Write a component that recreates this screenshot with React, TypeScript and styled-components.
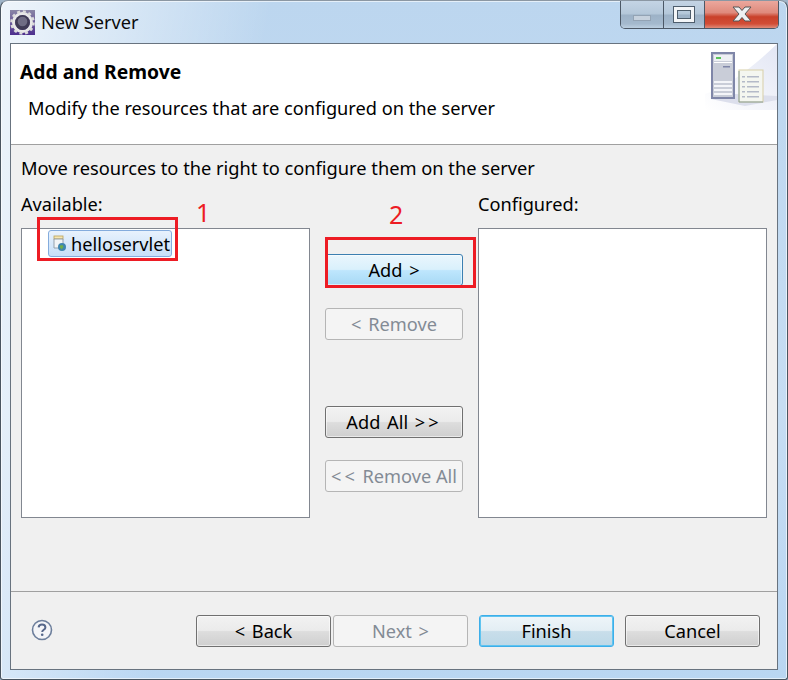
import React from "react";
import styled, { createGlobalStyle } from "styled-components";

const Global = createGlobalStyle`
  html, body { margin: 0; padding: 0; background: #9fb4c8; }
  #root { width: 788px; height: 680px; }
  * { box-sizing: border-box; }
`;

const Frame = styled.div`
  position: relative;
  width: 788px;
  height: 680px;
  display: flex;
  flex-direction: column;
  padding: 0 10px 9px;
  overflow: hidden;
  border: 1px solid #4a5560;
  border-top-color: #8b97a3;
  border-radius: 8px 8px 3px 3px;
  background:
    linear-gradient(100deg, rgba(255,255,255,0.75) 0%, rgba(255,255,255,0) 30%),
    linear-gradient(180deg, #bcd6ef 0%, #c6ddf3 60%, #b9d6f2 100%);
  font-family: "Noto Sans", "Open Sans", sans-serif;
  color: #000;
  margin: 0;
  box-shadow: inset 0 0 0 1px rgba(255,255,255,0.6);
`;

const TitleBar = styled.div`
  height: 42px;
  margin: 0 -1px 0 -1px;
  display: flex;
  align-items: flex-start;
  flex: none;
`;

const AppIcon = styled.svg`
  width: 25px;
  height: 25px;
  margin-top: 9px;
  flex: none;
`;

const TitleText = styled.div`
  font-size: 18.2px;
  line-height: 24px;
  margin: 9px 0 0 6px;
  color: #0a0a0a;
  flex: 1;
`;

const Controls = styled.div`
  display: flex;
  height: 29px;
  margin-right: -1px;
  margin-top: -1px;
  border: 1px solid #4c5866;
  border-top: 0;
  border-radius: 0 0 5px 5px;
  overflow: hidden;
`;

const Ctl = styled.div<{ $w: number; $close?: boolean }>`
  width: ${(p) => p.$w}px;
  display: flex;
  align-items: center;
  justify-content: center;
  background: ${(p) =>
    p.$close
      ? "linear-gradient(180deg,#ecaaa0 0%,#df8a7c 45%,#c9412a 60%,#d24d36 85%,#e08a78 100%)"
      : "linear-gradient(180deg,#c5d5e5 0%,#b5c8da 48%,#9db2c7 55%,#a4b9cd 85%,#bccfe0 100%)"};
  border-right: ${(p) => (p.$close ? "0" : "1px solid #4c5866")};
`;

const MinGlyph = styled.div`
  width: 18px;
  height: 6px;
  margin-top: 7px;
  background: #c6d1dd;
  border: 1px solid #93a3b4;
`;

const MaxGlyph = styled.div`
  width: 20px;
  height: 15px;
  background: transparent;
  border: 3px solid #f4f6f8;
  outline: 1px solid #4e5d6c;
  box-shadow: inset 0 0 0 1px #4e5d6c;
`;

const Panel = styled.div`
  flex: 1;
  display: flex;
  flex-direction: column;
  margin-left: -1px;
  margin-right: -1px;
  border: 1px solid #68737f;
  background: #f0f0f0;
  min-height: 0;
`;

const Header = styled.div`
  height: 101px;
  flex: none;
  display: flex;
  background: #fff;
  border-bottom: 1px solid #a0a0a0;
`;

const HeaderText = styled.div`
  flex: 1;
  padding: 16px 0 0 9px;
`;

const HeaderTitle = styled.div`
  font-size: 19.3px;
  font-weight: 700;
  line-height: 24px;
`;

const HeaderDesc = styled.div`
  font-size: 18.2px;
  line-height: 24px;
  margin: 12px 0 0 8px;
`;

const Banner = styled.svg`
  width: 72px;
  height: 66px;
  flex: none;
`;

const Body = styled.div`
  flex: 1;
  padding: 11px 10px 0 10px;
  display: flex;
  flex-direction: column;
`;

const Instruction = styled.div`
  font-size: 18.25px;
  line-height: 24px;
`;

const Columns = styled.div`
  display: grid;
  grid-template-columns: 289px 138px 289px;
  column-gap: 15px;
  margin-top: 12px;
`;

const ListCol = styled.div`
  display: flex;
  flex-direction: column;
`;

const ListLabel = styled.div`
  font-size: 18.2px;
  line-height: 24px;
  height: 36px;
`;

const ListBox = styled.div`
  height: 290px;
  background: #fff;
  border: 1px solid #828790;
  padding: 1px 0 0 26px;
`;

const TreeItem = styled.div`
  display: inline-flex;
  align-items: center;
  gap: 4px;
  height: 27px;
  width: 124px;
  padding-left: 3px;
  border: 1px solid #84acdd;
  border-radius: 3px;
  background: linear-gradient(180deg, #e8f2fd 0%, #c7dff8 100%);
  font-size: 18.2px;
  line-height: 24px;
`;

const ProjIcon = styled.svg`
  width: 15px;
  height: 17px;
  flex: none;
`;

const MiddleCol = styled.div`
  padding-top: 62px;
  display: flex;
  flex-direction: column;
`;

type Kind = "normal" | "hot" | "disabled" | "default";

const Btn = styled.div<{ $kind?: Kind; $mt?: number; $w?: number; $ml?: number; $tight?: boolean }>`
  width: ${(p) => p.$w ?? 138}px;
  height: 32px;
  margin-top: ${(p) => p.$mt ?? 0}px;
  margin-left: ${(p) => p.$ml ?? 0}px;
  flex: none;
  display: flex;
  align-items: center;
  justify-content: center;
  font-size: 18.2px;
  word-spacing: ${(p) => (p.$tight ? 0 : 2)}px;
  line-height: 24px;
  white-space: pre;
  border-radius: 3px;
  border: 1px solid
    ${(p) =>
      p.$kind === "hot"
        ? "#3c7fb1"
        : p.$kind === "disabled"
        ? "#b5b5b5"
        : p.$kind === "default"
        ? "#3daee9"
        : "#707070"};
  color: ${(p) => (p.$kind === "disabled" ? "#838b95" : "#000")};
  background: ${(p) =>
    p.$kind === "hot"
      ? "linear-gradient(180deg,#eaf6fd 0%,#d9f0fc 48%,#bee6fd 52%,#a7d9f5 100%)"
      : p.$kind === "disabled"
      ? "#f4f4f4"
      : p.$kind === "default"
      ? "linear-gradient(180deg,#eef5f9 0%,#e3eef4 48%,#c8deea 52%,#bdd8e7 100%)"
      : "linear-gradient(180deg,#f2f2f2 0%,#ebebeb 48%,#dddddd 52%,#cfcfcf 100%)"};
  box-shadow: ${(p) =>
    p.$kind === "default"
      ? "inset 0 0 0 1px #5fc4f0"
      : p.$kind === "disabled"
      ? "none"
      : "inset 0 0 0 1px rgba(255,255,255,0.55)"};
`;

const Chevrons = styled.span`
  letter-spacing: 3px;
`;

const Footer = styled.div`
  height: 78px;
  flex: none;
  border-top: 1px solid #a0a0a0;
  display: flex;
  align-items: flex-start;
  padding: 23px 17px 0 20px;
`;

const HelpIcon = styled.svg`
  width: 22px;
  height: 22px;
  margin-top: 4px;
  flex: none;
`;

const FooterSpacer = styled.div`
  flex: 1;
`;

const Redbox = styled.div<{ $x: number; $y: number; $w: number; $h: number }>`
  position: absolute;
  left: ${(p) => p.$x}px;
  top: ${(p) => p.$y}px;
  width: ${(p) => p.$w}px;
  height: ${(p) => p.$h}px;
  border: 3px solid #ed1c24;
  pointer-events: none;
`;

const RedNum = styled.div<{ $x: number; $y: number }>`
  position: absolute;
  left: ${(p) => p.$x}px;
  top: ${(p) => p.$y}px;
  color: #ed1c24;
  font-size: 25px;
  line-height: 28px;
`;

export default function App() {
  return (
    <>
      <Global />
      <Frame>
        <TitleBar>
          <AppIcon viewBox="0 0 25 25">
            <defs>
              <linearGradient id="appbg" x1="0" y1="0" x2="0" y2="1">
                <stop offset="0" stopColor="#8a86a6" />
                <stop offset="1" stopColor="#4d2f8e" />
              </linearGradient>
            </defs>
            <rect width="25" height="25" fill="url(#appbg)" />
            <circle cx="12.5" cy="12.5" r="9" fill="none" stroke="#e8e8e8" strokeWidth="3" />
            <circle cx="12.5" cy="12.5" r="11" fill="none" stroke="#dcdcdc" strokeWidth="2.6" strokeDasharray="3 2.76" />
            <circle cx="12.5" cy="12.5" r="7.4" fill="#3f3a55" />
            <circle cx="12.5" cy="11.5" r="4.8" fill="#6f6c84" />
          </AppIcon>
          <TitleText>New Server</TitleText>
          <Controls>
            <Ctl $w={43}>
              <MinGlyph />
            </Ctl>
            <Ctl $w={41}>
              <MaxGlyph />
            </Ctl>
            <Ctl $w={73} $close>
              <svg width="20" height="16" viewBox="0 0 20 16">
                <path
                  d="M1 1h6l3 3.5L13 1h6l-6 7 6 7h-6l-3-3.5L7 15H1l6-7z"
                  fill="#eef0f2"
                  stroke="#555"
                  strokeWidth="1"
                />
              </svg>
            </Ctl>
          </Controls>
        </TitleBar>
        <Panel>
          <Header>
            <HeaderText>
              <HeaderTitle>Add and Remove</HeaderTitle>
              <HeaderDesc>Modify the resources that are configured on the server</HeaderDesc>
            </HeaderText>
            <Banner viewBox="0 0 72 66">
              <defs>
                <linearGradient id="bg" x1="0" y1="1" x2="1" y2="0">
                  <stop offset="0" stopColor="#ffffff" />
                  <stop offset="1" stopColor="#e2e6f4" />
                </linearGradient>
              </defs>
              <path d="M0 66 L0 50 Q30 40 72 0 L72 66 Z" fill="url(#bg)" />
              <path d="M6 55 L30 50 L72 52 L72 56 L40 62Z" fill="#dcdfec" />
              <rect x="7" y="9" width="22" height="45" fill="#c9cdd8" stroke="#7f86a8" strokeWidth="2" />
              <rect x="9" y="11" width="18" height="6" fill="#eef0f4" />
              <rect x="11" y="13" width="5" height="2" fill="#5cc45c" />
              <rect x="9" y="18" width="18" height="1" fill="#fff" />
              <rect x="18" y="22" width="7" height="1.5" fill="#7f86a8" />
              <g fill="#f4f5f9">
                <rect x="9" y="37" width="18" height="2" />
                <rect x="9" y="41" width="18" height="2" />
                <rect x="9" y="45" width="18" height="2" />
                <rect x="9" y="49" width="18" height="2" />
              </g>
              <rect x="34" y="26" width="24" height="32" fill="#f4f6f0" stroke="#d8cfa8" strokeWidth="1" />
              <path d="M34 58 V27 M34 58 H58" stroke="#8aa09a" strokeWidth="1" fill="none" />
              <g fill="#b4bac8">
                <rect x="37" y="32" width="3" height="1.5" />
                <rect x="42" y="32" width="12" height="1.5" />
                <rect x="37" y="37" width="3" height="1.5" />
                <rect x="42" y="37" width="12" height="1.5" />
                <rect x="37" y="42" width="3" height="1.5" />
                <rect x="42" y="42" width="12" height="1.5" />
                <rect x="37" y="47" width="3" height="1.5" />
                <rect x="42" y="47" width="12" height="1.5" />
                <rect x="37" y="52" width="3" height="1.5" />
                <rect x="42" y="52" width="12" height="1.5" />
              </g>
            </Banner>
          </Header>
          <Body>
            <Instruction>Move resources to the right to configure them on the server</Instruction>
            <Columns>
              <ListCol>
                <ListLabel>Available:</ListLabel>
                <ListBox>
                  <TreeItem>
                    <ProjIcon viewBox="0 0 15 17">
                      <rect x="2" y="1" width="9" height="3" fill="#f6e6b0" stroke="#b9a15a" strokeWidth="0.8" />
                      <path d="M2 4h9v9H2z" fill="#f2f4f6" stroke="#8c98a4" strokeWidth="0.9" />
                      <circle cx="10" cy="12" r="4" fill="#3f86b0" />
                      <path d="M8 10.5l2.5-.5 1 2-2 2.5-1.5-2z" fill="#6fae4a" />
                    </ProjIcon>
                    helloservlet
                  </TreeItem>
                </ListBox>
              </ListCol>
              <MiddleCol>
                <Btn $kind="hot">Add &gt;</Btn>
                <Btn $kind="disabled" $mt={22}>&lt; Remove</Btn>
                <Btn $mt={66}>Add All <Chevrons>&gt;&gt;</Chevrons></Btn>
                <Btn $kind="disabled" $mt={22} $tight><Chevrons>&lt;&lt;</Chevrons> Remove All</Btn>
              </MiddleCol>
              <ListCol>
                <ListLabel>Configured:</ListLabel>
                <ListBox />
              </ListCol>
            </Columns>
          </Body>
          <Footer>
            <HelpIcon viewBox="0 0 22 22">
              <circle cx="11" cy="11" r="9.5" fill="#f4f5f8" stroke="#6d7f9c" strokeWidth="1.6" />
              <path
                d="M7.6 8.4C7.8 6.6 9.2 5.6 11 5.6c2 0 3.4 1.1 3.4 2.8 0 2.4-3.2 2.4-3.2 4.6"
                fill="none"
                stroke="#56678a"
                strokeWidth="2"
              />
              <circle cx="11.2" cy="15.8" r="1.3" fill="#56678a" />
            </HelpIcon>
            <FooterSpacer />
            <Btn $w={135}>&lt; Back</Btn>
            <Btn $w={135} $kind="disabled" $ml={2}>Next &gt;</Btn>
            <Btn $w={135} $kind="default" $ml={11}>Finish</Btn>
            <Btn $w={135} $ml={11}>Cancel</Btn>
          </Footer>
        </Panel>
        <Redbox $x={36} $y={216} $w={141} $h={44} />
        <Redbox $x={324} $y={236} $w={151} $h={51} />
        <RedNum $x={195} $y={197}>1</RedNum>
        <RedNum $x={388} $y={199}>2</RedNum>
      </Frame>
    </>
  );
}
